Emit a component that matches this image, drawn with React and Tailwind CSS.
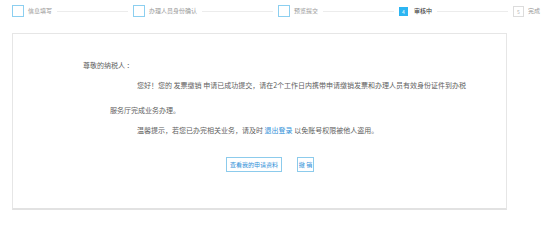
import React from 'react';

const STEPS = [
  { label: '信息填写', state: 'done' },
  { label: '办理人员身份确认', state: 'done' },
  { label: '预览提交', state: 'done' },
  { label: '审核中', state: 'active', num: 4 },
  { label: '完成', state: 'todo', num: 5 },
];

function StepBox({ step }) {
  if (step.state === 'active') {
    return (
      <div className="w-[9px] h-[9px] bg-[#2cb5f2] text-white text-[5px] leading-[9px] text-center shrink-0">
        {step.num}
      </div>
    );
  }
  if (step.state === 'todo') {
    return (
      <div className="w-[11px] h-[11px] border border-[#dcdcdc] text-[#b5b5b5] text-[5px] leading-[9px] text-center shrink-0">
        {step.num}
      </div>
    );
  }
  return <div className="w-[12px] h-[12px] border border-[#8ccff0] shrink-0" />;
}

export default function App() {
  return (
    <div className="w-[558px] h-[219px] bg-white overflow-hidden font-['Noto_Sans_CJK_SC',sans-serif]">
      {/* steps */}
      <div className="flex items-center h-[22px] pl-[12px] pr-[18px]">
        {STEPS.map((step, i) => (
          <React.Fragment key={step.label}>
            <StepBox step={step} />
            <span
              className={
                'text-[6px] leading-[8px] whitespace-nowrap ' +
                (step.state === 'active' ? 'text-[#444] font-medium ml-[6px]' : 'text-[#9a9a9a] ml-[4px]')
              }
            >
              {step.label}
            </span>
            {i < STEPS.length - 1 && (
              <div className="flex-1 h-px bg-[#ececec] mx-[5px]" />
            )}
          </React.Fragment>
        ))}
      </div>

      {/* card */}
      <div className="mt-[11px] ml-[12px] w-[495px] h-[177px] border border-[#e6e6e6] border-b-2 border-b-[#e2e2e2] text-[7px] text-[#606060]">
        <div className="mt-[21px] ml-[70px] h-[20px] leading-[20px]">尊敬的纳税人 ：</div>
        <div className="ml-[124px] h-[20px] leading-[20px] whitespace-nowrap">
          您好！您的 发票缴销 申请已成功提交，请在2个工作日内携带申请缴销发票和办理人员有效身份证件到办税
        </div>
        <div className="mt-[5px] ml-[97px] h-[20px] leading-[20px]">服务厅完成业务办理。</div>
        <div className="ml-[124px] h-[20px] leading-[20px] whitespace-nowrap">
          温馨提示，若您已办完相关业务，请及时 <span className="text-[#2f8fd8]">退出登录</span> 以免账号权限被他人盗用。
        </div>
        <div className="flex mt-[17px] ml-[213px] gap-[15px]">
          <button className="w-[56px] h-[15px] border border-[#8ccbec] text-[#2f8fd8] text-[6px] leading-[13px] text-center">
            查看我的申请资料
          </button>
          <button className="w-[17px] h-[15px] border border-[#8ccbec] text-[#2f8fd8] text-[6px] leading-[13px] text-center">
            撤 销
          </button>
        </div>
      </div>
    </div>
  );
}
